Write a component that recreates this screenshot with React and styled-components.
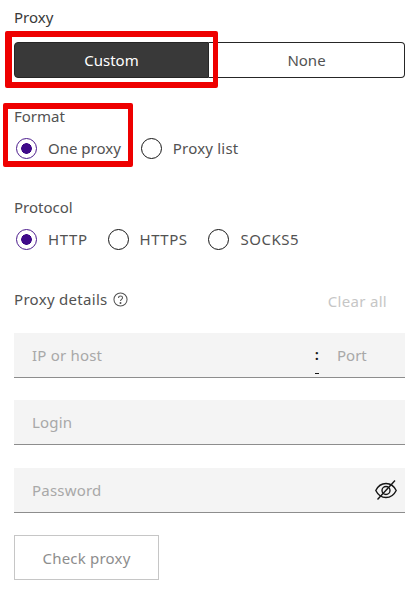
import React from "react";
import styled, { createGlobalStyle } from "styled-components";

const GlobalStyle = createGlobalStyle`
    * {
        box-sizing: border-box;
    }
    html, body {
        margin: 0;
        padding: 0;
        background: #fff;
    }
    body {
        font-family: "Noto Sans", "Open Sans", sans-serif;
        font-size: 15px;
    }
`;

const EyeOffIcon = () => (
    <svg width="22" height="20" viewBox="0 0 22 20" fill="none" stroke="#161616" strokeWidth="1.4">
        <path d="M.8 10.500C3 6 6.600 3.500 11 3.500s8 2.500 10.200 7c-2.200 4.500-5.800 7-10.200 7s-8-2.500-10.200-7z" />
        <circle cx="11" cy="10.500" r="4" />
        <path d="M2.500 19.500L20 .5" />
    </svg>
);

const HelpIcon = () => (
    <svg width="15" height="15" viewBox="0 0 16 16" fill="none" stroke="#525252" strokeWidth="1.100">
        <circle cx="8" cy="8" r="7" />
        <path d="M5.900 6.300c0-1.300 1-2.100 2.200-2.100s2.100.8 2.100 1.900c0 1.700-2.200 1.700-2.200 3.500" />
        <circle cx="8" cy="11.700" r=".5" fill="#525252" />
    </svg>
);

const Radio = ({ label, checked, gap, spacing }) => (
    <RadioItem $gap={gap}>
        <RadioCircle $checked={checked} />
        <RadioText $spacing={spacing}>{label}</RadioText>
    </RadioItem>
);

const App = () => {
    return (
        <Page>
            <GlobalStyle />
            <ProxyLabel>Proxy</ProxyLabel>
            <Toggle>
                <ToggleButton $active>Custom</ToggleButton>
                <ToggleButton>None</ToggleButton>
                <ToggleMark />
            </Toggle>

            <FormatSection>
                <FieldLabel>Format</FieldLabel>
                <RadioRow>
                    <Radio label="One proxy" checked gap={20} />
                    <Radio label="Proxy list" spacing={0.2} />
                </RadioRow>
                <FormatMark />
            </FormatSection>

            <ProtocolSection>
                <FieldLabel>Protocol</FieldLabel>
                <RadioRow>
                    <Radio label="HTTP" checked gap={20} spacing={0.6} />
                    <Radio label="HTTPS" gap={21} spacing={0.5} />
                    <Radio label="SOCKS5" spacing={0.5} />
                </RadioRow>
            </ProtocolSection>

            <DetailsHeader>
                <DetailsTitle>
                    Proxy details
                    <HelpIcon />
                </DetailsTitle>
                <ClearAll>Clear all</ClearAll>
            </DetailsHeader>

            <Field $top={23}>
                <Placeholder>IP or host</Placeholder>
                <Colon>:</Colon>
                <PortPlaceholder>Port</PortPlaceholder>
            </Field>
            <Field>
                <Placeholder>Login</Placeholder>
            </Field>
            <Field $top={23}>
                <Placeholder>Password</Placeholder>
                <EyeOffIcon />
            </Field>

            <CheckButton>Check proxy</CheckButton>
        </Page>
    );
};

export default App;

const Page = styled.div`
    width: 416px;
    height: 593px;
    padding: 7px 11px 0 14px;
    overflow: hidden;
    background: #fff;
`;

const ProxyLabel = styled.div`
    height: 21px;
    line-height: 21px;
    color: #393939;
`;

const FieldLabel = styled.div`
    height: 21px;
    line-height: 21px;
    color: #525252;
`;

const Toggle = styled.div`
    position: relative;
    display: grid;
    grid-template-columns: 195px 1fr;
    height: 36px;
    margin-top: 14px;
`;

const ToggleButton = styled.div`
    display: flex;
    align-items: center;
    justify-content: center;
    border: 1px solid #262626;
    border-left-width: ${(p) => (p.$active ? "1px" : "0")};
    border-radius: ${(p) => (p.$active ? "4px 0 0 4px" : "0 4px 4px 0")};
    background: ${(p) => (p.$active ? "#393939" : "#fff")};
    color: ${(p) => (p.$active ? "#fff" : "#525252")};
`;

const ToggleMark = styled.div`
    position: absolute;
    left: -9px;
    top: -11px;
    width: 213px;
    height: 57px;
    border: solid #ee0000;
    border-width: 6px 5px 6px 7px;
    border-radius: 2px;
`;

const FormatSection = styled.section`
    position: relative;
    margin-top: 28px;
`;

const FormatMark = styled.div`
    position: absolute;
    left: -11px;
    top: -3px;
    width: 130px;
    height: 64px;
    border: solid #ee0000;
    border-width: 6px 5px 6px 5px;
    border-radius: 2px;
`;

const ProtocolSection = styled.section`
    margin-top: 38px;
`;

const RadioRow = styled.div`
    display: flex;
    align-items: center;
    height: 22px;
    margin-top: 10px;
    padding-left: 2px;
`;

const RadioItem = styled.div`
    display: flex;
    align-items: center;
    gap: 11px;
    margin-right: ${(p) => p.$gap || 0}px;
`;

const RadioCircle = styled.span`
    display: block;
    flex: none;
    width: 21px;
    height: 21px;
    border-radius: 50%;
    border: 1px solid ${(p) => (p.$checked ? "#4a1a8c" : "#161616")};
    background: ${(p) =>
        p.$checked ? "radial-gradient(circle, #3f0a8a 0 5px, transparent 5.6px)" : "transparent"};
`;

const RadioText = styled.span`
    color: #525252;
    line-height: 22px;
    letter-spacing: ${(p) => p.$spacing || 0}px;
`;

const DetailsHeader = styled.div`
    display: flex;
    align-items: center;
    justify-content: space-between;
    height: 22px;
    margin-top: 38px;
    padding-right: 18px;
`;

const DetailsTitle = styled.div`
    display: flex;
    align-items: center;
    gap: 5px;
    color: #525252;
    letter-spacing: 0.3px;
`;

const ClearAll = styled.div`
    color: #c6c6c6;
    padding-top: 3px;
    letter-spacing: 0.3px;
`;

const Field = styled.div`
    display: flex;
    align-items: center;
    justify-content: space-between;
    height: 45px;
    margin-top: ${(p) => p.$top || 22}px;
    padding: 0 8px 0 18px;
    background: #f4f4f4;
    border-bottom: 1px solid #8d8d8d;
`;

const Placeholder = styled.span`
    flex: 1;
    color: #a8a8a8;
    letter-spacing: 0.2px;
`;

const Colon = styled.span`
    position: relative;
    top: -1px;
    color: #161616;
    font-weight: 600;
    margin-right: 18px;

    &::after {
        content: "";
        position: absolute;
        left: 0;
        bottom: -10px;
        width: 4px;
        height: 1px;
        background: #161616;
    }
`;

const PortPlaceholder = styled.span`
    width: 60px;
    color: #a8a8a8;
`;

const CheckButton = styled.div`
    display: flex;
    align-items: center;
    justify-content: center;
    width: 145px;
    height: 45px;
    margin-top: 22px;
    border: 1px solid #c6c6c6;
    color: #8d8d8d;
    letter-spacing: 0.2px;
`;
